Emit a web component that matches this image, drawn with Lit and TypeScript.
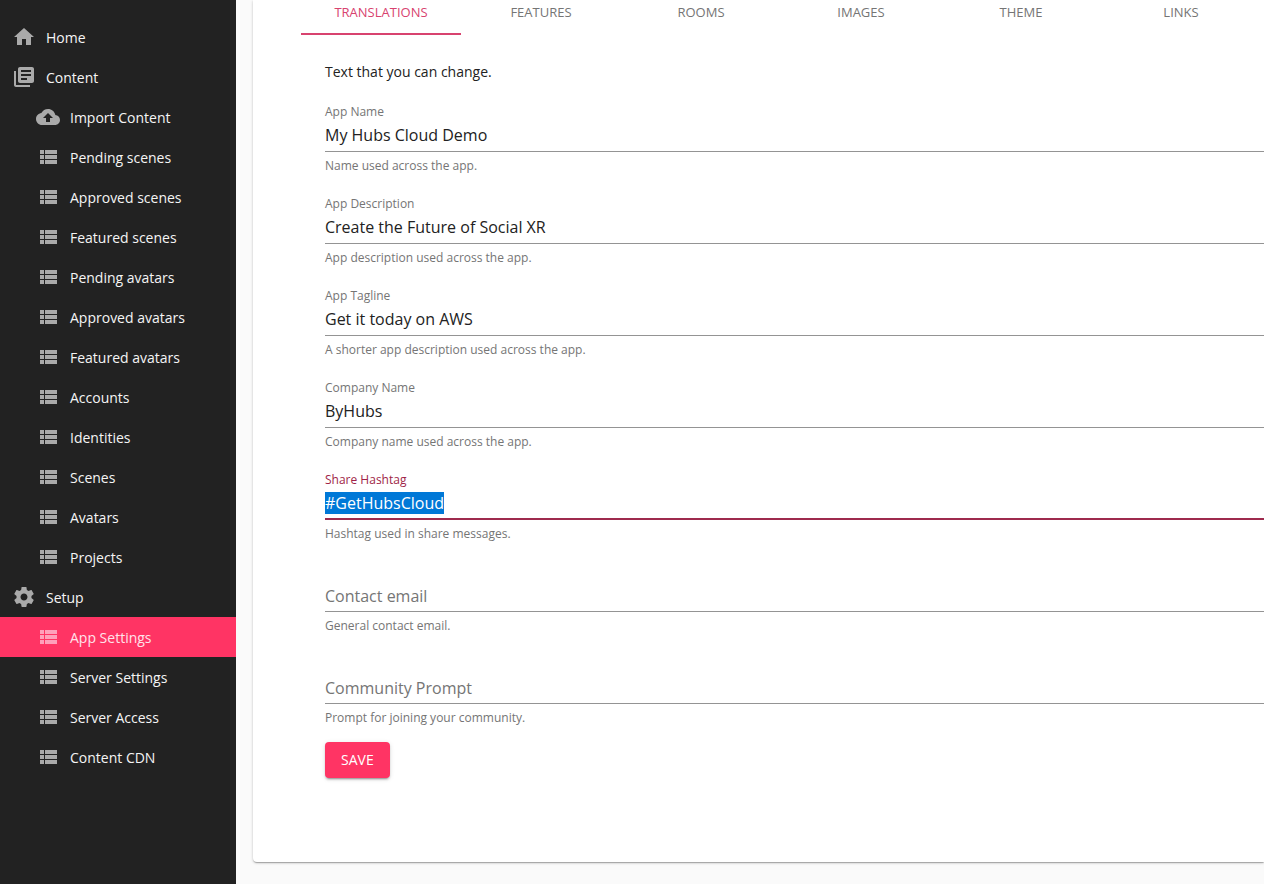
import { LitElement, html, css, svg, nothing } from "lit";
import { customElement, property, state } from "lit/decorators.js";
import { classMap } from "lit/directives/class-map.js";

const ICONS = {
  home: svg`<path d="M10 20v-6h4v6h5v-8h3L12 3 2 12h3v8z"/>`,
  library: svg`<path d="M4 6H2v14c0 1.1.9 2 2 2h14v-2H4V6z"/><path fill-rule="evenodd" d="M20 2H8c-1.100 0-2 .9-2 2v12c0 1.100.9 2 2 2h12c1.100 0 2-.9 2-2V4c0-1.100-.9-2-2-2zM19 11H9V9h10v2zM15 15H9v-2h6v2zM19 7H9V5h10v2z"/>`,
  upload: svg`<path d="M19.350 10.040C18.670 6.590 15.640 4 12 4 9.110 4 6.600 5.640 5.350 8.040 2.340 8.360 0 10.910 0 14c0 3.310 2.690 6 6 6h13c2.760 0 5-2.240 5-5 0-2.640-2.050-4.780-4.650-4.960zM14 13v4h-4v-4H7l5-5 5 5h-3z"/>`,
  list: svg`<path d="M4 14h4v-4H4v4zm0 5h4v-4H4v4zM4 9h4V5H4v4zm5 5h12v-4H9v4zm0 5h12v-4H9v4zM9 5v4h12V5H9z"/>`,
  gear: svg`<path d="M19.430 12.980c.04-.32.07-.64.07-.98s-.03-.66-.07-.98l2.110-1.650c.19-.15.24-.42.12-.64l-2-3.460c-.12-.22-.39-.3-.61-.22l-2.490 1c-.52-.4-1.080-.73-1.690-.98l-.38-2.650C14.460 2.180 14.250 2 14 2h-4c-.25 0-.46.18-.49.42l-.38 2.650c-.61.25-1.170.59-1.690.98l-2.490-1c-.23-.09-.49 0-.61.22l-2 3.460c-.13.22-.07.49.12.64l2.110 1.650c-.04.32-.07.65-.07.98s.03.66.07.98l-2.110 1.650c-.19.15-.24.42-.12.64l2 3.460c.12.22.39.3.61.22l2.490-1c.52.4 1.080.73 1.690.98l.38 2.650c.03.24.24.42.49.42h4c.25 0 .46-.18.49-.42l.38-2.650c.61-.25 1.170-.59 1.690-.98l2.490 1c.23.09.49 0 .61-.22l2-3.460c.12-.22.07-.49-.12-.64l-2.110-1.650zM12 15.500c-1.930 0-3.500-1.570-3.500-3.500s1.570-3.500 3.500-3.500 3.500 1.570 3.500 3.500-1.570 3.500-3.500 3.500z"/>`,
};

interface NavItem {
  label: string;
  icon: keyof typeof ICONS;
  nested: boolean;
}

const top = (label: string, icon: keyof typeof ICONS): NavItem => ({ label, icon, nested: false });
const sub = (label: string, icon: keyof typeof ICONS = "list"): NavItem => ({ label, icon, nested: true });

const NAV: NavItem[] = [
  top("Home", "home"),
  top("Content", "library"),
  sub("Import Content", "upload"),
  sub("Pending scenes"),
  sub("Approved scenes"),
  sub("Featured scenes"),
  sub("Pending avatars"),
  sub("Approved avatars"),
  sub("Featured avatars"),
  sub("Accounts"),
  sub("Identities"),
  sub("Scenes"),
  sub("Avatars"),
  sub("Projects"),
  top("Setup", "gear"),
  sub("App Settings"),
  sub("Server Settings"),
  sub("Server Access"),
  sub("Content CDN"),
];

const TABS = ["Translations", "Features", "Rooms", "Images", "Theme", "Links"];

const FIELDS = [
  { id: "app-name", label: "App Name", value: "My Hubs Cloud Demo", help: "Name used across the app." },
  { id: "app-description", label: "App Description", value: "Create the Future of Social XR", help: "App description used across the app." },
  { id: "app-tagline", label: "App Tagline", value: "Get it today on AWS", help: "A shorter app description used across the app." },
  { id: "company-name", label: "Company Name", value: "ByHubs", help: "Company name used across the app." },
  { id: "share-hashtag", label: "Share Hashtag", value: "#GetHubsCloud", help: "Hashtag used in share messages." },
  { id: "contact-email", label: "Contact email", value: "", help: "General contact email." },
  { id: "community-prompt", label: "Community Prompt", value: "", help: "Prompt for joining your community." },
];

@customElement("side-nav")
class SideNav extends LitElement {
  @property() current = "";

  static styles = css`
    :host {
      display: block;
      background: #222;
      padding-top: 17px;
    }
    .item {
      display: flex;
      align-items: center;
      gap: 10px;
      height: 40px;
      padding-left: 12px;
      color: #f5f5f5;
      font-size: 14px;
      line-height: 20px;
      text-decoration: none;
      white-space: nowrap;
    }
    .nested {
      padding-left: 36px;
    }
    .current {
      background: #ff3464;
      color: #ffe3ea;
    }
    .icon {
      flex: none;
      width: 24px;
      height: 24px;
      fill: #aaa;
    }
    .current .icon {
      fill: #ff9fba;
    }
    .text {
      padding-top: 2px;
    }
  `;

  render() {
    return html`<nav aria-label="Main">
      ${NAV.map(
        (n) => html`<a
          href="#"
          class=${classMap({ item: true, nested: n.nested, current: n.label === this.current })}
          aria-current=${n.label === this.current ? "page" : nothing}
          ><svg class="icon" viewBox="0 0 24 24" aria-hidden="true">${ICONS[n.icon]}</svg><span class="text">${n.label}</span></a
        >`
      )}
    </nav>`;
  }
}

@customElement("text-field")
class TextField extends LitElement {
  @property() fieldId = "";
  @property() label = "";
  @property() help = "";
  @property() value = "";

  static styles = css`
    :host {
      display: block;
    }
    .field {
      display: grid;
      grid-template-rows: 16px 32px 20px;
    }
    .label {
      grid-area: 1 / 1;
      font-size: 12px;
      line-height: 16px;
      color: #757575;
    }
    .empty:not(:focus-within) .label {
      grid-area: 2 / 1;
      z-index: 1;
      pointer-events: none;
      font-size: 16px;
      line-height: 32px;
    }
    .input {
      grid-area: 2 / 1;
      box-sizing: border-box;
      width: 100%;
      min-width: 0;
      margin: 0;
      padding: 0 0 1px;
      border: 0;
      border-bottom: 1px solid #949494;
      border-radius: 0;
      outline: 0;
      background: transparent;
      color: #222;
      font-family: inherit;
      font-size: 16px;
    }
    .input::selection {
      background: #0078d7;
      color: #fff;
    }
    .input:focus {
      padding-bottom: 0;
      border-bottom: 2px solid #9e2a4d;
    }
    .field:focus-within .label {
      color: #a01f48;
    }
    .help {
      grid-area: 3 / 1;
      margin: 0;
      padding-top: 6px;
      font-size: 12px;
      line-height: 16px;
      color: #757575;
    }
  `;

  focusAndSelect() {
    const input = this.renderRoot.querySelector("input")!;
    input.focus();
    input.select();
  }

  private onInput(e: Event) {
    this.value = (e.target as HTMLInputElement).value;
  }

  render() {
    return html`<div class=${classMap({ field: true, empty: !this.value })}>
      <label class="label" for=${this.fieldId}>${this.label}</label>
      <input
        class="input"
        id=${this.fieldId}
        type="text"
        spellcheck="false"
        autocomplete="off"
        aria-describedby="help"
        .value=${this.value}
        @input=${this.onInput}
      />
      <p class="help" id="help">${this.help}</p>
    </div>`;
  }
}

@customElement("app-root")
class AppRoot extends LitElement {
  @state() private tab = TABS[0];

  static styles = css`
    :host {
      display: grid;
      grid-template-columns: 236px minmax(0, 1fr);
      min-height: 100vh;
      background: #fafafa;
      font-family: "Open Sans", "Noto Sans", sans-serif;
      color: #222;
    }
    .main {
      padding: 0 0 22px 17px;
    }
    .card {
      background: #fff;
      border-bottom-left-radius: 4px;
      box-shadow: 0 1px 3px rgba(0, 0, 0, 0.2), 0 1px 1px rgba(0, 0, 0, 0.14), 0 2px 1px -1px rgba(0, 0, 0, 0.12);
      padding: 0 0 84px 48px;
    }
    .tabs {
      display: flex;
      overflow: hidden;
    }
    .tab {
      flex: 0 0 160px;
      height: 35px;
      padding: 0 12px 10px;
      border: 0;
      border-bottom: 2px solid transparent;
      background: none;
      color: #757575;
      font-family: inherit;
      font-size: 13px;
      line-height: 20px;
      text-transform: uppercase;
    }
    .selected {
      color: #d8436f;
      border-bottom-color: #d8436f;
    }
    .form {
      padding: 24px 0 0 24px;
    }
    .intro {
      margin: 0 0 20px;
      font-size: 14px;
      line-height: 25px;
    }
    .fields {
      display: flex;
      flex-direction: column;
      gap: 24px;
    }
    .save {
      display: block;
      margin-top: 18px;
      padding: 6px 16px;
      border: 0;
      border-radius: 4px;
      background: #ff3464;
      color: #fff;
      font-family: inherit;
      font-size: 14px;
      line-height: 24px;
      text-transform: uppercase;
      box-shadow: 0 3px 1px -2px rgba(0, 0, 0, 0.2), 0 2px 2px rgba(0, 0, 0, 0.14), 0 1px 5px rgba(0, 0, 0, 0.12);
    }
  `;

  async firstUpdated() {
    const field = this.renderRoot.querySelector<TextField>("text-field.hashtag")!;
    await field.updateComplete;
    field.focusAndSelect();
  }

  render() {
    return html`
      <side-nav current="App Settings"></side-nav>
      <main class="main">
        <section class="card">
          <div class="tabs" role="tablist">
            ${TABS.map(
              (t) => html`<button
                type="button"
                role="tab"
                class=${classMap({ tab: true, selected: t === this.tab })}
                aria-selected=${t === this.tab ? "true" : "false"}
                @click=${() => (this.tab = t)}
              >
                ${t}
              </button>`
            )}
          </div>
          <form class="form" @submit=${(e: Event) => e.preventDefault()}>
            <p class="intro">Text that you can change.</p>
            <div class="fields">
              ${FIELDS.map(
                (f) => html`<text-field
                  class=${classMap({ hashtag: f.id === "share-hashtag" })}
                  .fieldId=${f.id}
                  .label=${f.label}
                  .value=${f.value}
                  .help=${f.help}
                ></text-field>`
              )}
            </div>
            <button class="save" type="submit">Save</button>
          </form>
        </section>
      </main>
    `;
  }
}
